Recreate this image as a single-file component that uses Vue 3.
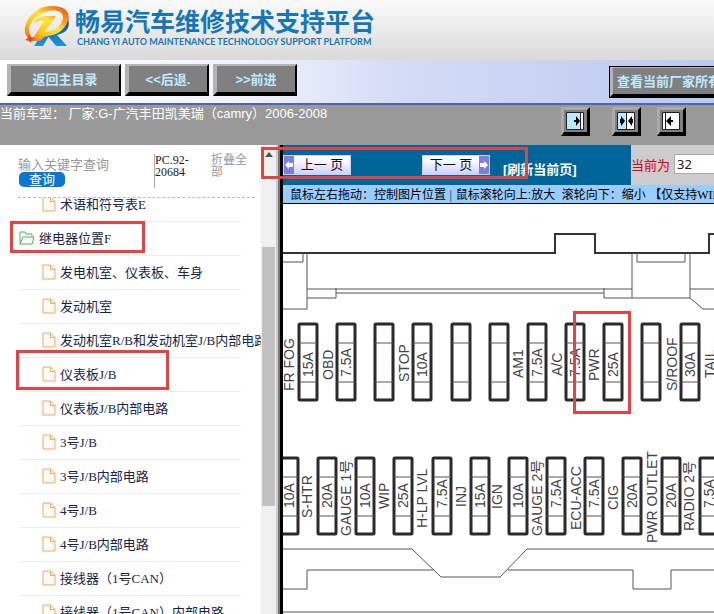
<script setup>
import { ref } from 'vue'

const pageNumber = ref('32')
const keyword = ref('')

const tree = [
  { label: '术语和符号表E' },
  { label: '继电器位置F', folder: true },
  { label: '发电机室、仪表板、车身' },
  { label: '发动机室' },
  { label: '发动机室R/B和发动机室J/B内部电路' },
  { label: '仪表板J/B' },
  { label: '仪表板J/B内部电路' },
  { label: '3号J/B' },
  { label: '3号J/B内部电路' },
  { label: '4号J/B' },
  { label: '4号J/B内部电路' },
  { label: '接线器（1号CAN）' },
  { label: '接线器（1号CAN）内部电路' },
]

const fuseRows = [
  {
    top: 324,
    values: ['15A', '7.5A', '', '10A', '', '', '7.5A', '7.5A', '25A', '', '30A'],
    left: 299,
    baseline: 377,
  },
  {
    top: 458,
    values: ['10A', '20A', '10A', '25A', '7.5A', '15A', '10A', '7.5A', '7.5A', '20A', '20A', '7.5A'],
    left: 280,
    baseline: 508,
  },
]
const fuses = fuseRows.flatMap((row) =>
  row.values.map((value, i) => ({
    value,
    x: Math.round(row.left + i * 38.15),
    y: row.top,
    textY: row.baseline,
  })),
)

const circuits = [
  { name: 'FR FOG', x: 294, y: 391 },
  { name: 'OBD', x: 333, y: 380 },
  { name: 'STOP', x: 409, y: 382 },
  { name: 'AM1', x: 523, y: 378 },
  { name: 'A/C', x: 562, y: 376 },
  { name: 'PWR', x: 599, y: 381 },
  { name: 'S/ROOF', x: 677, y: 391 },
  { name: 'TAIL', x: 715, y: 378 },
  { name: 'S-HTR', x: 312, y: 518 },
  { name: 'GAUGE 1号', x: 351, y: 536 },
  { name: 'WIP', x: 389, y: 509 },
  { name: 'H-LP LVL', x: 427, y: 528 },
  { name: 'INJ', x: 466, y: 507 },
  { name: 'IGN', x: 502, y: 509 },
  { name: 'GAUGE 2号', x: 542, y: 536 },
  { name: 'ECU-ACC', x: 581, y: 530 },
  { name: 'CIG', x: 618, y: 510 },
  { name: 'PWR OUTLET', x: 657, y: 543 },
  { name: 'RADIO 2号', x: 694, y: 531 },
]
</script>

<template>
  <div class="shell">
    <header class="brand">
      <svg class="logo" viewBox="0 0 50 46" aria-hidden="true">
        <defs>
          <linearGradient id="ring" x1="0" y1="1" x2="1" y2="0">
            <stop offset="0" stop-color="#f0531c" />
            <stop offset="0.3" stop-color="#ffc21a" />
            <stop offset="0.55" stop-color="#ffe63a" />
            <stop offset="0.75" stop-color="#f8951d" />
            <stop offset="1" stop-color="#e2471c" />
          </linearGradient>
          <linearGradient id="leg" x1="0" y1="0" x2="0" y2="1">
            <stop offset="0" stop-color="#1a3f9c" />
            <stop offset="1" stop-color="#149be0" />
          </linearGradient>
        </defs>
        <path d="M12 42 L18 33 L27 32 L21 42 Z M46 14 Q50 28 35 31 L45 42 L34 42 L25 31 Q42 28 46 14 Z" fill="url(#leg)" />
        <path fill-rule="evenodd" fill="url(#ring)" d="M6 34 C-3 25 8 3 29 2 C43 1 49 9 46 17 C42 28 32 32 23 32 L18 37 L9 37 L22 17 C17 16 14 18 12 20 C14 13 20 12 25 12 L34 12 L23 28 C33 27 40 21 41 14 C41 5 29 5 21 9 C9 15 4 24 9 32 Z" />
        <path fill="#e8491c" d="M7 30 L9 33 L13 34 L10 36 L9 39 L7 37 L3 36 L6 34 Z" />
      </svg>
      <div class="brand-text">
        <h1>畅易汽车维修技术支持平台</h1>
        <p>CHANG YI AUTO MAINTENANCE TECHNOLOGY SUPPORT PLATFORM</p>
      </div>
    </header>

    <nav class="nav">
      <button type="button" class="bevel wide">返回主目录</button>
      <button type="button" class="bevel">&lt;&lt;后退.</button>
      <button type="button" class="bevel">&gt;&gt;前进</button>
      <div class="nav-end">
        <button type="button" class="bevel outlined">查看当前厂家所有</button>
      </div>
    </nav>

    <div class="vehicle">
      <span class="model">当前车型：&nbsp;厂家:G-广汽丰田凯美瑞（camry）2006-2008</span>
      <div class="toggles">
        <button type="button" class="toggle first" aria-label="展开左栏">
          <svg viewBox="0 0 18 18"><path d="M0.500 0.500H17.500V17.500H0.500Z" fill="#fff" stroke="#222" /><path d="M1 1H14V17H1Z" fill="#b9eaff" /><path d="M14.500 0V18" stroke="#222" /><path d="M8 8H10V4L14 9L10 14V10H8Z" fill="#000" /></svg>
        </button>
        <button type="button" class="toggle" aria-label="平分两栏">
          <svg viewBox="0 0 18 18"><path d="M0.500 0.500H17.500V17.500H0.500Z" fill="#fff" stroke="#222" /><path d="M1 1H9V17H1Z" fill="#b9eaff" /><path d="M9.500 0V18" stroke="#222" /><path d="M3 7H4V4L8 9L4 14V11H3ZM16 7H15V4L11 9L15 14V11H16Z" fill="#000" /></svg>
        </button>
        <button type="button" class="toggle" aria-label="收起左栏">
          <svg viewBox="0 0 18 18"><path d="M0.500 0.500H17.500V17.500H0.500Z" fill="#fff" stroke="#222" /><path d="M3.500 0V18" stroke="#222" /><path d="M11 8H9V4L4 9L9 14V10H11Z" fill="#000" /></svg>
        </button>
      </div>
    </div>

    <div class="work">
      <aside class="side">
        <div class="side-body">
          <form class="search" @submit.prevent>
            <div class="search-field">
              <input v-model="keyword" type="text" placeholder="输入关键字查询" aria-label="输入关键字查询" />
              <button type="submit">查询</button>
            </div>
            <span class="code">PC.92-20684</span>
            <a href="#" class="fold">折叠全部</a>
          </form>
          <div class="tree-clip">
            <ul class="tree">
              <li v-for="item in tree" :key="item.label" :class="{ folder: item.folder }">
                <a href="#">
                  <svg v-if="item.folder" class="folder-icon" viewBox="0 0 16 14" aria-hidden="true">
                    <path d="M1 13V1H6L7 3H13V6M1 13L4 6H15L13 13Z" />
                  </svg>
                  <svg v-else class="file-icon" viewBox="0 0 14 16" aria-hidden="true">
                    <path d="M1 1H8.500L13 5.500V15H1ZM8.500 1V5.500H13" />
                  </svg>
                  <span>{{ item.label }}</span>
                </a>
              </li>
            </ul>
          </div>
        </div>
        <div class="scroll" aria-hidden="true">
          <svg viewBox="0 0 8 5"><path d="M0 5L4 0L8 5Z" fill="#505050" /></svg>
          <div class="thumb"></div>
        </div>
      </aside>

      <main class="viewer">
        <div class="tools">
          <div class="pager">
            <button type="button" class="page prev">
              <svg viewBox="0 0 10 18" aria-hidden="true"><path d="M1 9L5 5V7H9V11H5V13Z" fill="#fff" /></svg>
              <span>上一 页</span>
            </button>
            <button type="button" class="page next">
              <span>下一 页</span>
              <svg viewBox="0 0 10 18" aria-hidden="true"><path d="M9 9L5 5V7H1V11H5V13Z" fill="#fff" /></svg>
            </button>
            <a href="#" class="refresh">[刷新当前页]</a>
          </div>
          <div class="current">
            <label for="page-no">当前为</label>
            <input id="page-no" v-model="pageNumber" type="text" />
          </div>
        </div>
        <p class="hint">鼠标左右拖动：控制图片位置 <i>|</i> 鼠标滚轮向上:放大&nbsp; 滚轮向下：缩小 【仅支持<span>WIN</span></p>
        <svg class="diagram" viewBox="283 204 431 410" preserveAspectRatio="xMinYMin slice" role="img" aria-label="仪表板J/B">
          <g class="outline">
            <path class="heavy" d="M283 253H555V234H595V253H709V234H720" />
            <path d="M303 253V262H283M307 253V309H283M307 289H632M307 298H336V288M336 293H604M604 288V298H690M632 253V298M637 253V262H685V253M690 253V298L703 309H720M690 289H720" />
            <path d="M283 549H412L441 577H500L527 549H720M283 589H307V570H433M508 570H633V589H671V570H720" />
            <path class="soft" d="M283 612H720" />
          </g>
          <g v-for="(fuse, i) in fuses" :key="i" class="fuse">
            <rect :x="fuse.x" :y="fuse.y" width="18" height="76" rx="1" />
            <path :d="`M${fuse.x} ${fuse.y + 19}h18M${fuse.x} ${fuse.y + 58}h18`" />
            <text :transform="`translate(${fuse.x + 14} ${fuse.textY}) rotate(-90)`">{{ fuse.value }}</text>
          </g>
          <text v-for="c in circuits" :key="c.name" :transform="`translate(${c.x} ${c.y}) rotate(-90)`">{{ c.name }}</text>
        </svg>
      </main>
    </div>

    <div class="mark mark-pager"></div>
    <div class="mark mark-folder"></div>
    <div class="mark mark-item"></div>
    <div class="mark mark-fuse"></div>
  </div>
</template>

<style>
body {
  overflow: hidden;
}
</style>

<style scoped>
.shell {
  position: relative;
  display: flex;
  flex-direction: column;
  height: 100vh;
  overflow: hidden;
  background: #fff;
  font-family: "Liberation Sans", "Noto Sans CJK SC", sans-serif;
  font-size: 13px;
}
.shell * {
  box-sizing: border-box;
}
a {
  color: inherit;
  text-decoration: none;
}
button,
input {
  font: inherit;
  margin: 0;
}

.brand {
  display: flex;
  flex: none;
  gap: 3px;
  height: 60px;
  padding: 4px 22px;
  background: linear-gradient(#fafafa, #dadada);
}
.logo {
  width: 50px;
  height: 46px;
}
.brand-text {
  color: #1577b5;
}
h1 {
  margin: 0;
  font: bold 25px/32px "Noto Sans CJK SC", sans-serif;
}
.brand-text p {
  margin: 0;
  padding-left: 2px;
  font: bold 9px/12px Lato, sans-serif;
  white-space: nowrap;
}

.nav {
  display: flex;
  flex: none;
  gap: 4px;
  height: 45px;
  padding: 4px 0 0 7px;
  border-bottom: 2px solid #4a62c4;
  background: linear-gradient(90deg, #fff 0%, #f0f3fd 35%, #d4dcf6 55%, #bcc9ef 100%);
}
.bevel {
  flex: none;
  width: 84px;
  height: 32px;
  padding: 0 0 2px;
  border: solid #000;
  border-width: 2px 2px 4px 4px;
  border-color: #b4b4b4 #000 #000 #b4b4b4;
  background: #808080;
  color: #bfeaff;
  font-weight: bold;
  white-space: nowrap;
}
.wide {
  width: 114px;
}
.nav-end {
  width: 105px;
  margin-left: auto;
  padding-top: 2px;
  overflow: hidden;
}
.outlined {
  width: 130px;
  padding-left: 4px;
  outline: 1px solid #000;
  outline-offset: -1px;
  text-align: left;
}

.vehicle {
  display: flex;
  flex: none;
  justify-content: space-between;
  height: 40px;
  background: #999;
  color: #fff;
}
.model {
  line-height: 17px;
  white-space: nowrap;
}
.toggles {
  display: flex;
  gap: 16px;
  padding: 2px 28px 0 0;
}
.toggle {
  width: 29px;
  height: 29px;
  padding: 2px;
  border: solid #000;
  border-width: 3px 3px 4px 3px;
  border-color: #aaa #000 #000 #aaa;
  background: #808080;
}
.toggle svg {
  display: block;
  width: 18px;
  height: 18px;
}
.toggle.first {
  margin-right: 6px;
}

.work {
  display: flex;
  flex: 1;
  min-height: 0;
}
.side {
  display: flex;
  flex: none;
  width: 283px;
  border-right: 3px solid #000;
}
.side-body {
  display: flex;
  flex: 1;
  flex-direction: column;
  min-width: 0;
}
.search {
  display: flex;
  flex: none;
  height: 53px;
  margin: 0 6px 0 18px;
  padding-top: 9px;
  border-bottom: 1px dashed #bbb;
}
.search-field {
  width: 136px;
  padding-top: 2px;
}
.search-field input {
  display: block;
  width: 100%;
  height: 16px;
  padding: 0;
  border: 0;
  background: none;
}
.search-field input::placeholder {
  color: #999;
}
.search-field button {
  display: block;
  width: 46px;
  height: 15px;
  margin-left: 1px;
  padding: 0;
  border: 0;
  border-radius: 5px;
  background: #0b76cf;
  color: #fff;
  line-height: 14px;
}
.code {
  width: 46px;
  height: 34px;
  border-left: 1px solid #aaa;
  font: 12px/12px "Liberation Serif", serif;
  color: #222;
}
.fold {
  width: 38px;
  margin-left: 11px;
  color: #999;
  font-size: 12px;
  line-height: 12px;
}
.tree-clip {
  flex: 1;
  min-height: 0;
  overflow: hidden;
}
.tree {
  margin: -10px 0 0;
  padding: 0 0 0 19px;
  list-style: none;
  font-family: "Liberation Serif", "Noto Sans CJK SC", serif;
  color: #16264a;
}
.tree li {
  width: 222px;
  height: 34px;
  padding-left: 23px;
  border-bottom: 1px solid #eee;
}
.tree li.folder {
  padding-left: 0;
}
.tree a {
  display: flex;
  gap: 4px;
  align-items: center;
  height: 31px;
  white-space: nowrap;
}
.file-icon {
  flex: none;
  width: 14px;
  height: 16px;
  fill: #fffaf3;
  stroke: #f0a868;
}
.folder-icon {
  flex: none;
  width: 16px;
  height: 14px;
  fill: none;
  stroke: #4fb455;
}

.scroll {
  display: flex;
  flex: none;
  flex-direction: column;
  align-items: center;
  width: 19px;
  padding: 7px 2px 0 0;
  border-right: 2px solid #777;
  background: linear-gradient(90deg, #f0f0f0 15px, #ccc 15px);
}
.scroll svg {
  width: 8px;
  height: 5px;
}
.thumb {
  width: 13px;
  height: 56%;
  margin-top: 90px;
  background: #c1c1c1;
}

.viewer {
  display: flex;
  flex: 1;
  flex-direction: column;
  min-width: 0;
}
.tools {
  display: flex;
  flex: none;
  height: 40px;
}
.pager {
  display: flex;
  flex: 1;
  align-items: flex-start;
  padding-top: 10px;
  background: #069;
}
.page {
  display: flex;
  flex: none;
  width: 68px;
  height: 20px;
  padding: 0;
  border: 1px solid #ccd0ff;
  background: linear-gradient(#fff, #f4f4ff 40%, #cfcff8);
  color: #111;
  font-size: 13px;
  line-height: 18px;
}
.page svg {
  width: 10px;
  height: 18px;
  background: #7d7fe0;
}
.page span {
  flex: 1;
  white-space: nowrap;
}
.next {
  margin-left: 71px;
}
.refresh {
  margin-left: 13px;
  padding-top: 5px;
  color: #fff;
  font-weight: bold;
  line-height: 20px;
  white-space: nowrap;
}
.current {
  display: flex;
  flex: none;
  align-items: center;
  gap: 4px;
  width: 83px;
  padding-bottom: 2px;
  overflow: hidden;
  background: #ccc;
  color: #d8001b;
}
.current label {
  flex: none;
}
.current input {
  width: 60px;
  height: 20px;
  padding: 0 2px;
  border: 1px solid #aaa;
  background: #fff;
  color: #222;
  font-family: "Noto Sans", sans-serif;
}
.hint {
  flex: none;
  height: 19px;
  margin: 0;
  padding-left: 7px;
  border-bottom: 1px solid #000;
  overflow: hidden;
  background: #9cf;
  color: #000;
  font-size: 12px;
  line-height: 20px;
  white-space: nowrap;
}
.hint span {
  font-family: "Liberation Serif", serif;
}
.hint i {
  color: #567;
  font-style: normal;
}
.diagram {
  flex: 1;
  width: 100%;
  min-height: 0;
  background: #fff;
  fill: #444;
  font-size: 14px;
}
.outline path {
  fill: none;
  stroke: #555;
}
.outline .heavy {
  stroke: #333;
  stroke-width: 2;
}
.outline .soft {
  stroke: #aaa;
  stroke-width: 2;
}
.fuse rect {
  fill: #fff;
  stroke: #2a2a2a;
  stroke-width: 3;
}
.fuse path {
  stroke: #555;
}

.mark {
  position: absolute;
  border: 3px solid #e54343;
  pointer-events: none;
}
.mark-pager {
  left: 261px;
  top: 147px;
  width: 267px;
  height: 32px;
}
.mark-folder {
  left: 10px;
  top: 221px;
  width: 135px;
  height: 32px;
}
.mark-item {
  left: 16px;
  top: 350px;
  width: 153px;
  height: 40px;
}
.mark-fuse {
  left: 573px;
  top: 311px;
  width: 58px;
  height: 103px;
}
</style>
